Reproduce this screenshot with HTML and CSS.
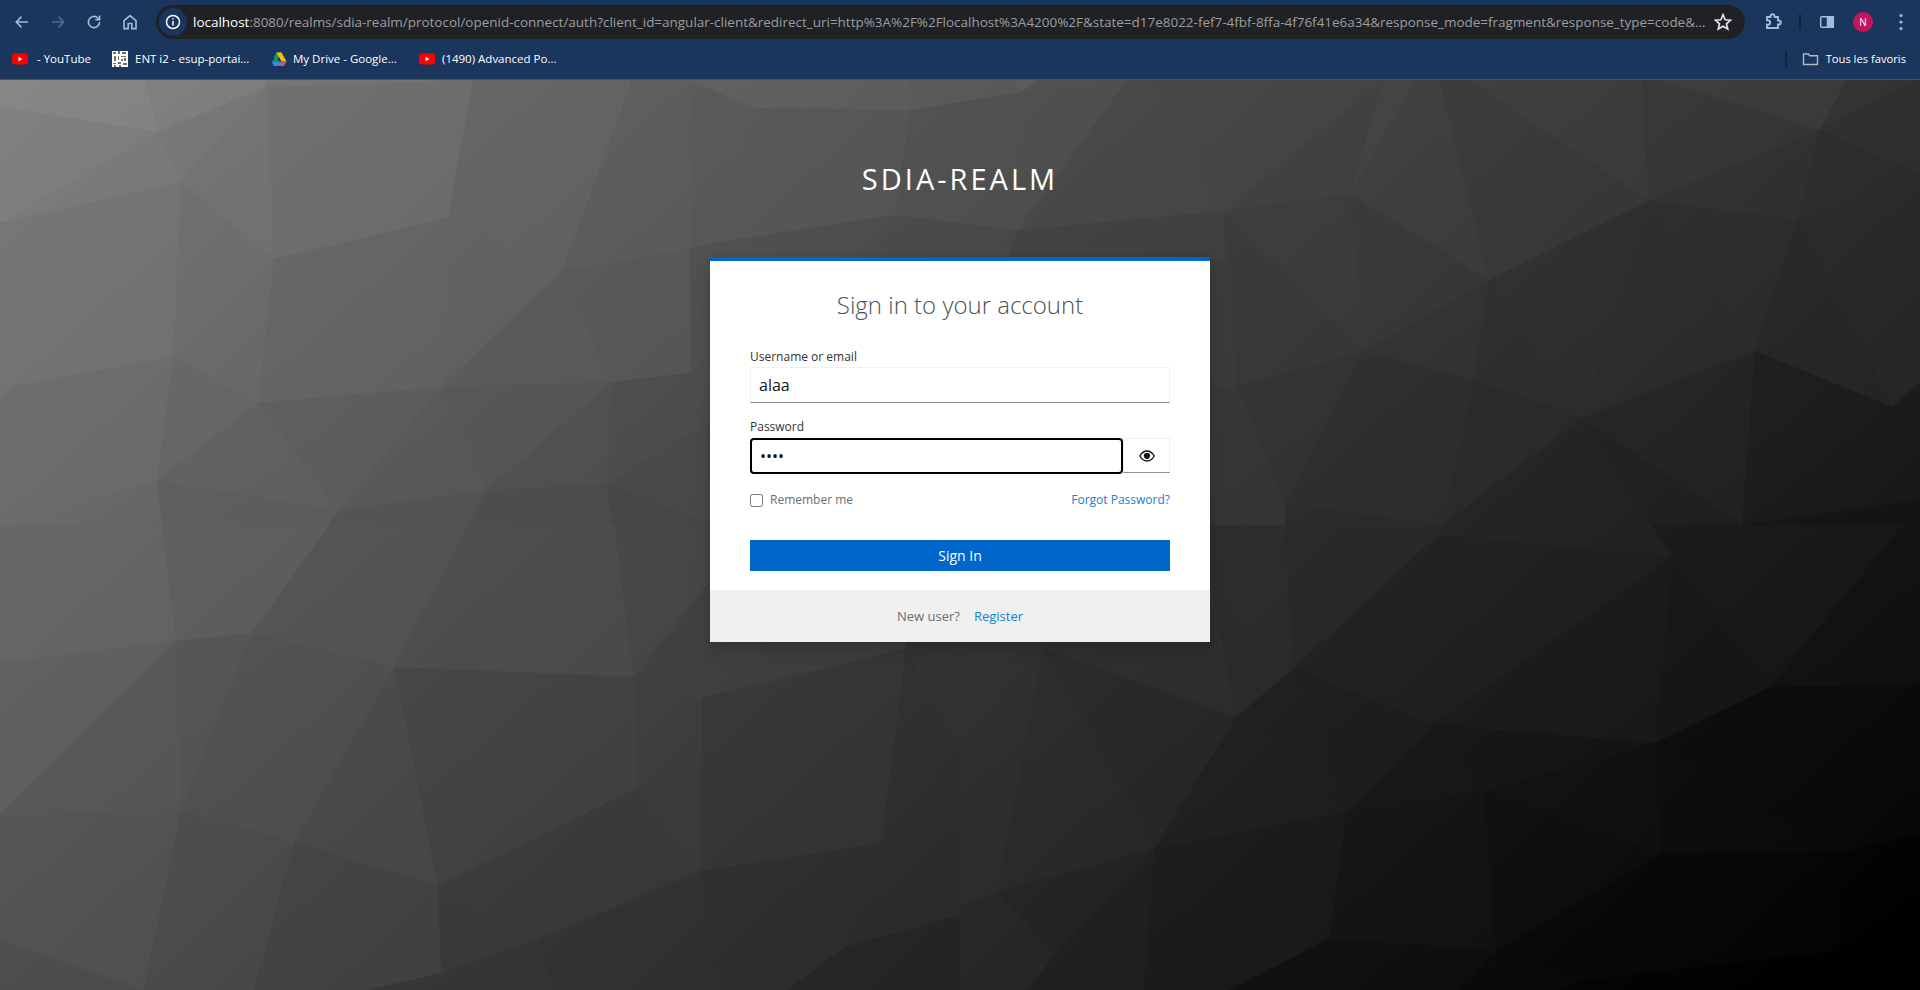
FILE: index.html
```html
<!DOCTYPE html>
<html lang="en">
<head>
<meta charset="utf-8">
<title>Sign in to sdia-realm</title>
<link rel="stylesheet" href="styles.css">
</head>
<body>
<header class="chrome">
  <div class="toolbar">
    <nav class="nav-icons">
      <svg class="ico" viewBox="0 0 16 16"><path d="M14 8H2.5M7.5 2.6 2.3 8l5.2 5.4"/></svg>
      <svg class="ico dim" viewBox="0 0 16 16"><path d="M2 8h11.5M8.5 2.6 13.7 8l-5.200 5.400"/></svg>
      <svg class="ico" viewBox="0 0 16 16"><path d="M13.600 8a5.600 5.600 0 1 1-1.700-4L13.500 5.600M13.600 1.400v4.300H9.300"/></svg>
      <svg class="ico" viewBox="0 0 16 16"><path d="M8 1.600 2 6.600v8h4.200V9.500h3.600v5.100H14v-8z"/></svg>
    </nav>
    <div class="omnibox">
      <span class="site-info"><svg class="info" viewBox="0 0 16 16"><circle cx="8" cy="8" r="6.500"/><path d="M8 7v4.500M8 4.200v1.300"/></svg></span>
      <span class="url"><span class="host">localhost</span>:8080/realms/sdia-realm/protocol/openid-connect/auth?client_id=angular-client&amp;redirect_uri=http%3A%2F%2Flocalhost%3A4200%2F&amp;state=d17e8022-fef7-4fbf-8ffa-4f76f41e6a34&amp;response_mode=fragment&amp;response_type=code&amp;…</span>
      <svg class="star" viewBox="0 0 16 16"><path d="M8 1.500 9.900 6l4.800.4-3.600 3.200 1.100 4.700L8 11.800l-4.200 2.500 1.100-4.700L1.300 6.400 6.100 6z"/></svg>
    </div>
    <div class="actions">
      <svg class="ico ext" viewBox="0 0 18 18"><path d="M3 4h3.500V3.200a2 2 0 0 1 4 0V4H14v3.500h.8a2 2 0 0 1 0 4H14V15H3v-3.200h.8a2.300 2.300 0 0 0 0-4.600H3z"/></svg>
      <span class="sep"></span>
      <svg class="panel" viewBox="0 0 16 16"><rect x="1.700" y="2.700" width="12.600" height="10.600" rx="1"/><path class="panel-fill" d="M8.500 2.700h5.800v10.600H8.500z"/></svg>
      <span class="avatar">N</span>
      <svg class="dots" viewBox="0 0 4 18"><circle cx="2" cy="2.500" r="1.600"/><circle cx="2" cy="9" r="1.600"/><circle cx="2" cy="15.500" r="1.600"/></svg>
    </div>
  </div>
  <div class="bookmarks">
    <a class="bm bm-yt"><svg class="fav" viewBox="0 0 16 16"><rect y="2.500" width="16" height="11" rx="3" fill="#f00"/><path d="M6.500 5.800v4.400L10.500 8z" fill="#fff"/></svg>&nbsp;- YouTube</a>
    <a class="bm bm-ent"><svg class="fav" viewBox="0 0 16 16"><rect width="16" height="16" fill="#fff"/><path d="M1 1h3v2H1zM6 0h2v3H6zM10 1h4v2h-4zM2 5h2v5H2zM6 5h1v4H6zM9 5h5v1H9zM12 7h2v3h-2zM9 8h2v2H9zM1 12h3v1H1zM6 11h3v2H6zM11 12h4v2h-4zM2 14h2v2H2zM7 14h2v2H7z" fill="#6f6f6f"/></svg>ENT i2 - esup-portai...</a>
    <a class="bm bm-drive"><svg class="fav" viewBox="0 0 16 16"><path d="M5.500 1.500h5L5.300 10.500 2.800 6z" fill="#0f9d58"/><path d="M5.500 1.500h5l5 9h-5z" fill="#fbbc04"/><path d="M.5 10.500h15L13 15H3z" fill="#4285f4"/><path d="M.5 10.500 5.300 6.500l2.700 4z" fill="#0f9d58"/><path d="M8 10.500h7.500L13 15H5.500z" fill="#ea4335" opacity=".45"/></svg>My Drive - Google...</a>
    <a class="bm bm-yt2"><svg class="fav" viewBox="0 0 16 16"><rect y="2.500" width="16" height="11" rx="3" fill="#f00"/><path d="M6.500 5.800v4.400L10.500 8z" fill="#fff"/></svg>(1490) Advanced Po...</a>
    <span class="bm-end">
      <span class="sep sep-bm"></span>
      <svg class="folder" viewBox="0 0 16 16"><path d="M1 3h4.800l1.500 1.800H15V13.500H1z"/></svg>
      <a class="bm bm-all">Tous les favoris</a>
    </span>
  </div>
</header>
<main class="page">
  <svg class="poly" viewBox="0 80 1920 910" preserveAspectRatio="none" aria-hidden="true">
    <defs><linearGradient id="base" gradientUnits="userSpaceOnUse" x1="0" y1="0" x2="1319" y2="1469"><stop offset="0" stop-color="#868686"/><stop offset="1" stop-color="#000"/></linearGradient></defs>
    <rect x="0" y="80" width="1920" height="910" fill="url(#base)"/>
    <g class="facets">
      <polygon fill="#8a8a8a" points="0,80 145,80 158,132 0,107"/>
      <polygon fill="#838383" points="145,80 266,80 266,87 158,132"/>
      <polygon fill="#808080" points="0,107 158,132 0,223"/>
      <polygon fill="#7c7c7c" points="158,132 181,182 0,223"/>
      <polygon fill="#787878" points="158,132 266,87 181,182"/>
      <polygon fill="#737373" points="266,87 274,259 181,182"/>
      <polygon fill="#6e6e6e" points="266,87 473,80 448,218 274,259"/>
      <polygon fill="#767676" points="266,80 473,80 266,87"/>
      <polygon fill="#636363" points="473,80 632,80 562,271 448,218"/>
      <polygon fill="#5b5b5b" points="632,80 700,80 700,247 562,271"/>
      <polygon fill="#575757" points="690,80 755,108 724,241 690,248"/>
      <polygon fill="#747474" points="0,223 181,182 173,357 13,386 0,397"/>
      <polygon fill="#6e6e6e" points="181,182 274,259 173,357"/>
      <polygon fill="#6a6a6a" points="173,357 274,259 258,403"/>
      <polygon fill="#646464" points="274,259 448,218 441,387 258,403"/>
      <polygon fill="#626262" points="448,218 562,271 441,387"/>
      <polygon fill="#5a5a5a" points="562,271 611,382 441,387"/>
      <polygon fill="#575757" points="562,271 700,247 700,373 611,382"/>
      <polygon fill="#6c6c6c" points="0,397 13,386 173,357 157,480 9,525 0,525"/>
      <polygon fill="#666666" points="173,357 258,403 157,480"/>
      <polygon fill="#606060" points="258,403 338,511 157,480"/>
      <polygon fill="#5c5c5c" points="258,403 441,387 338,511"/>
      <polygon fill="#575757" points="441,387 487,490 338,511"/>
      <polygon fill="#545454" points="441,387 611,382 487,490"/>
      <polygon fill="#4e4e4e" points="611,382 607,483 487,490"/>
      <polygon fill="#4a4a4a" points="611,382 715,370 710,420 607,483"/>
      <polygon fill="#5c5c5c" points="157,480 338,511 328,525 162,525"/>
      <polygon fill="#505050" points="338,511 487,490 469,525 328,525"/>
      <polygon fill="#484848" points="487,490 607,483 612,525 469,525"/>
      <polygon fill="#424242" points="607,483 715,525 612,525"/>
      <polygon fill="#464646" points="607,483 710,420 715,525"/>
      <polygon fill="#4c4c4c" points="690,248 724,241 712,262 712,400 690,373"/>

      <polygon fill="#666666" points="0,525 162,525 176,641 0,663"/>
      <polygon fill="#5e5e5e" points="162,525 329,525 252,633 176,641"/>
      <polygon fill="#525252" points="329,525 468,525 394,667 252,633"/>
      <polygon fill="#4b4b4b" points="468,525 614,525 634,677 394,667"/>
      <polygon fill="#454545" points="614,525 715,525 715,575 634,677"/>
      <polygon fill="#3e3e3e" points="634,677 715,575 715,690 702,698"/>
      <polygon fill="#606060" points="0,663 176,641 0,814"/>
      <polygon fill="#565656" points="176,641 181,810 0,814"/>
      <polygon fill="#535353" points="176,641 252,633 181,810"/>
      <polygon fill="#4e4e4e" points="252,633 394,667 294,842 181,810"/>
      <polygon fill="#474747" points="394,667 438,886 294,842"/>
      <polygon fill="#404040" points="394,667 634,677 637,788 438,886"/>
      <polygon fill="#3c3c3c" points="634,677 702,698 637,788"/>
      <polygon fill="#3a3a3a" points="702,698 700,871 637,788"/>
      <polygon fill="#373737" points="637,788 700,871 539,939"/>
      <polygon fill="#363636" points="637,788 539,939 438,886"/>
      <polygon fill="#333333" points="702,698 906,648 881,843 700,871"/>
      <polygon fill="#535353" points="0,814 181,810 0,940"/>
      <polygon fill="#515151" points="181,810 144,990 0,940"/>
      <polygon fill="#4a4a4a" points="0,940 144,990 0,990"/>
      <polygon fill="#4a4a4a" points="181,810 294,842 144,990"/>
      <polygon fill="#484848" points="294,842 254,990 144,990"/>
      <polygon fill="#404040" points="294,842 438,886 441,973 367,990 254,990"/>
      <polygon fill="#353535" points="438,886 539,939 441,973"/>
      <polygon fill="#2f2f2f" points="441,973 539,939 551,990 367,990"/>
      <polygon fill="#2d2d2d" points="539,939 700,871 716,990 551,990"/>
      <polygon fill="#2b2b2b" points="700,871 881,843 845,947 787,990 716,990"/>
      <polygon fill="#292929" points="881,843 960,748 960,915 845,947"/>
      <polygon fill="#202020" points="845,947 960,915 960,990 787,990"/>
      <polygon fill="#2c2c2c" points="881,843 906,648 960,748"/>
      <polygon fill="#3d3d3d" points="705,640 906,640 906,648 702,698"/>

      <polygon fill="#2f2f2f" points="906,640 1043,640 1043,648 960,748 906,648"/>
      <polygon fill="#262626" points="1043,648 1236,717 1155,848"/>
      <polygon fill="#292929" points="1043,648 1155,848 997,892"/>
      <polygon fill="#2d2d2d" points="960,745 1043,648 997,892 960,905"/>
      <polygon fill="#222222" points="997,892 1155,848 1055,955"/>
      <polygon fill="#272727" points="960,905 997,892 1055,955 1027,990 960,990"/>
      <polygon fill="#1d1d1d" points="1055,955 1155,848 1144,990 1027,990"/>
      <polygon fill="#181818" points="1155,848 1346,812 1330,938 1229,990 1144,990"/>
      <polygon fill="#1d1d1d" points="1155,848 1236,717 1346,812"/>
      <polygon fill="#1c1c1c" points="1236,717 1294,668 1346,812"/>
      <polygon fill="#1a1a1a" points="1294,668 1433,724 1346,812"/>
      <polygon fill="#141414" points="1433,724 1484,791 1346,812"/>
      <polygon fill="#131313" points="1433,724 1655,743 1484,791"/>
      <polygon fill="#0f0f0f" points="1484,791 1655,743 1660,854"/>
      <polygon fill="#0b0b0b" points="1655,743 1839,853 1660,854"/>
      <polygon fill="#0a0a0a" points="1655,743 1770,687 1839,853"/>
      <polygon fill="#0a0a0a" points="1770,687 1920,684 1920,833 1839,853"/>
      <polygon fill="#111111" points="1346,812 1484,791 1496,951 1330,938"/>
      <polygon fill="#0c0c0c" points="1484,791 1660,854 1496,951"/>
      <polygon fill="#050505" points="1660,854 1839,853 1839,951 1578,981 1496,951"/>
      <polygon fill="#030303" points="1839,853 1920,833 1920,892 1839,951"/>
      <polygon fill="#000000" points="1839,951 1920,892 1920,990 1836,990"/>
      <polygon fill="#000000" points="1578,981 1839,951 1836,990 1560,990"/>
      <polygon fill="#070707" points="1496,951 1578,981 1560,990 1456,990"/>
      <polygon fill="#0c0c0c" points="1330,938 1496,951 1456,990 1229,990"/>

      <polygon fill="#2b2b2b" points="1205,525 1285,525 1294,668 1214,603"/>
      <polygon fill="#2a2a2a" points="1214,603 1294,668 1236,717"/>
      <polygon fill="#2e2e2e" points="1043,640 1205,640 1205,600 1214,603 1236,717 1043,648"/>
      <polygon fill="#272727" points="1285,525 1438,535 1294,668"/>
      <polygon fill="#1f1f1f" points="1438,535 1433,724 1294,668"/>
      <polygon fill="#1f1f1f" points="1438,535 1673,557 1433,724"/>
      <polygon fill="#1a1a1a" points="1673,557 1655,743 1433,724"/>
      <polygon fill="#161616" points="1673,557 1770,687 1655,743"/>
      <polygon fill="#191919" points="1673,557 1742,525 1903,525 1770,687"/>
      <polygon fill="#121212" points="1770,687 1903,525 1920,525 1920,684"/>
      <polygon fill="#232323" points="1443,525 1652,525 1673,557 1438,535"/>
      <polygon fill="#1a1a1a" points="1652,525 1742,525 1673,557"/>

      <polygon fill="#454545" points="1148,80 1383,80 1224,211"/>
      <polygon fill="#464646" points="1383,80 1416,80 1350,194"/>
      <polygon fill="#404040" points="1383,80 1350,194 1224,211"/>
      <polygon fill="#404040" points="1416,80 1439,80 1489,280 1350,194"/>
      <polygon fill="#3b3b3b" points="1439,80 1470,80 1649,201 1489,280"/>
      <polygon fill="#404040" points="1470,80 1642,80 1649,201"/>
      <polygon fill="#3b3b3b" points="1642,80 1660,80 1820,130 1649,201"/>
      <polygon fill="#434343" points="1660,80 1847,80 1820,130"/>
      <polygon fill="#383838" points="1847,80 1920,80 1820,130"/>
      <polygon fill="#343434" points="1820,130 1920,80 1920,175"/>
      <polygon fill="#2f2f2f" points="1820,130 1920,175 1920,188 1798,220"/>
      <polygon fill="#343434" points="1820,130 1798,220 1649,201"/>
      <polygon fill="#3c3c3c" points="1224,211 1350,194 1364,352"/>
      <polygon fill="#393939" points="1350,194 1489,280 1364,352"/>
      <polygon fill="#373737" points="1224,211 1364,352 1237,386"/>
      <polygon fill="#3a3a3a" points="1205,211 1224,211 1237,386 1205,390"/>
      <polygon fill="#333333" points="1364,352 1489,280 1474,380"/>
      <polygon fill="#2e2e2e" points="1489,280 1582,418 1474,380"/>
      <polygon fill="#303030" points="1489,280 1649,201 1582,418"/>
      <polygon fill="#2e2e2e" points="1649,201 1755,351 1582,418"/>
      <polygon fill="#2f2f2f" points="1649,201 1798,220 1755,351"/>
      <polygon fill="#2a2a2a" points="1798,220 1892,407 1755,351"/>
      <polygon fill="#2d2d2d" points="1798,220 1920,188 1920,382 1892,407"/>
      <polygon fill="#323232" points="1237,386 1364,352 1285,504"/>
      <polygon fill="#2d2d2d" points="1364,352 1474,380 1443,525 1285,504"/>
      <polygon fill="#2a2a2a" points="1474,380 1582,418 1443,525"/>
      <polygon fill="#232323" points="1582,418 1651,525 1443,525"/>
      <polygon fill="#202020" points="1582,418 1742,525 1651,525"/>
      <polygon fill="#252525" points="1582,418 1755,351 1742,525"/>
      <polygon fill="#1d1d1d" points="1755,351 1892,407 1742,525"/>
      <polygon fill="#1a1a1a" points="1892,407 1920,403 1920,500 1742,525"/>
      <polygon fill="#131313" points="1920,500 1920,525 1742,525"/>
      <polygon fill="#363636" points="1205,390 1237,386 1285,504 1285,525 1205,525"/>
      <polygon fill="#292929" points="1285,504 1443,525 1438,535 1285,525"/>

      <polygon fill="#616161" points="690,80 783,80 755,108"/>
      <polygon fill="#606060" points="783,80 910,80 910,110 755,108"/>
      <polygon fill="#5c5c5c" points="910,80 1012,80 1022,92 910,110"/>
      <polygon fill="#626262" points="1012,80 1036,80 1022,92"/>
      <polygon fill="#515151" points="1036,80 1127,80 1022,92"/>
      <polygon fill="#565656" points="755,108 910,110 895,215 724,241"/>
      <polygon fill="#505050" points="910,110 1022,92 1017,230 895,215"/>
      <polygon fill="#4f4f4f" points="1022,92 1127,80 1017,230"/>
      <polygon fill="#474747" points="1127,80 1148,80 1224,211 1017,230"/>
      <polygon fill="#4b4b4b" points="724,241 895,215 845,262 705,262"/>
      <polygon fill="#474747" points="895,215 1017,230 1007,262 845,262"/>
      <polygon fill="#3e3e3e" points="1017,230 1224,211 1224,262 1007,262"/>
    </g>
  </svg>
  <div class="login">
    <h1 class="realm">SDIA-REALM</h1>
    <section class="card">
      <div class="card-body">
        <h2 class="card-title">Sign in to your account</h2>
        <form class="form">
          <label class="label" for="username">Username or email</label>
          <input class="field" id="username" type="text" value="alaa">
          <label class="label label-pw" for="password">Password</label>
          <div class="pw-row">
            <input class="field field-focus" id="password" type="password" value="alaa">
            <button class="eye" type="button" aria-label="Show password"><svg viewBox="0 0 16 12"><path class="eye-out" d="M.8 6C2.800 2.600 5.300 1 8 1s5.200 1.600 7.200 5c-2 3.400-4.500 5-7.200 5S2.800 9.400.8 6z"/><circle class="eye-pupil" cx="8" cy="5.800" r="3.100"/></svg></button>
          </div>
          <div class="options">
            <label class="remember"><input class="check" type="checkbox">Remember me</label>
            <a class="link">Forgot Password?</a>
          </div>
          <button class="submit" type="button">Sign In</button>
        </form>
      </div>
      <div class="card-foot"><span class="new-user">New user?</span><a class="link link-reg">Register</a></div>
    </section>
  </div>
</main>
</body>
</html>
```
FILE: styles.css
```css
* { box-sizing: border-box; }
html, body { margin: 0; height: 100%; }
body { display: flex; flex-direction: column; height: 990px; overflow: hidden; font-family: "Open Sans", "Noto Sans", sans-serif; background: #000; }

.chrome { height: 80px; flex: none; background: #1a365d; border-bottom: 1px solid #35567f; display: flex; flex-direction: column; }
.toolbar { height: 44px; flex: none; display: flex; align-items: center; }
.nav-icons { width: 156px; flex: none; display: flex; gap: 20px; padding-left: 14px; }
.ico { width: 16px; height: 16px; fill: none; stroke: #a3bbdc; stroke-width: 1.6; }
.ico.dim { stroke: #506b93; }
.omnibox { width: 1589px; height: 34px; flex: none; border-radius: 17px; background: #202124; display: flex; align-items: center; padding-left: 3px; }
.site-info { width: 28px; height: 28px; border-radius: 50%; background: #1a365d; display: flex; align-items: center; justify-content: center; flex: none; }
.info { width: 16px; height: 16px; fill: none; stroke: #fff; stroke-width: 1.5; }
.url { margin-left: 6px; width: 1518px; white-space: nowrap; overflow: hidden; font-size: 13.47px; color: #9b9da1; flex: none; }
.host { color: #fff; }
.star { width: 18px; height: 18px; margin-left: 3px; fill: none; stroke: #e3e3e3; stroke-width: 1.5; flex: none; }
.actions { flex: 1; display: flex; align-items: center; }
.ext { width: 18px; height: 18px; margin-left: 19px; stroke-width: 1.9; }
.sep { width: 2px; height: 16px; background: #0f2542; margin-left: 17px; flex: none; }
.panel { width: 16px; height: 16px; margin-left: 18px; fill: none; stroke: #a3bbdc; stroke-width: 1.5; flex: none; }
.panel-fill { fill: #a3bbdc; }
.avatar { width: 20px; height: 20px; margin-left: 18px; border-radius: 50%; background: #c2185b; color: #fff; font-size: 10px; line-height: 20px; text-align: center; flex: none; }
.dots { width: 4px; height: 18px; margin-left: 26px; fill: #a3bbdc; flex: none; }

.bookmarks { height: 29px; flex: none; display: flex; align-items: center; padding-left: 12px; font-size: 11.5px; color: #fff; }
.bm { display: flex; align-items: center; white-space: nowrap; }
.fav { width: 16px; height: 16px; flex: none; margin-right: 7px; }
.bm-yt { width: 100px; }
.bm-ent { width: 159px; }
.bm-drive { width: 148px; }
.bm-yt2 { width: 200px; }
.bm-yt .fav { margin-right: 6px; }
.bm-drive .fav { margin-right: 6px; }
.bm-end { margin-left: auto; display: flex; align-items: center; padding-right: 14px; }
.sep-bm { height: 16px; margin: 0 15px 0 0; }
.folder { width: 17px; height: 16px; margin-right: 7px; fill: none; stroke: #b5b8bd; stroke-width: 1.4; flex: none; }
.bm-all { font-size: 11.2px; }

.page { position: relative; flex: 1; overflow: hidden; }
.poly { position: absolute; inset: 0; width: 100%; height: 100%; }
.facets { opacity: .6; }
.login { position: relative; width: 500px; margin: 0 auto; display: flex; flex-direction: column; }
.realm { margin: 0; height: 177px; padding-top: 81px; text-align: center; font-size: 29px; line-height: 35px; font-weight: 400; letter-spacing: 3px; color: #fff; }

.card { background: #fff; border-top: 4px solid #06c; height: 385px; display: flex; flex-direction: column; box-shadow: 0 8px 16px rgba(3,3,3,.16), 0 0 6px rgba(3,3,3,.08); }
.card-body { flex: 1; padding: 27px 40px 0; }
.card-title { margin: 0; text-align: center; font-size: 24px; line-height: 33px; font-weight: 300; color: #4d5258; }
.form { display: flex; flex-direction: column; margin-top: 27px; }
.label { font-size: 12px; line-height: 17px; color: #333; }
.label-pw { margin-top: 15px; }
.field { width: 100%; height: 36px; margin-top: 2px; padding: 0 8px; border: 1px solid #f0f0f0; border-bottom-color: #8a8d90; border-radius: 0; background: #fff; font: 16px "Open Sans", sans-serif; color: #151515; outline: 0; }
.pw-row { display: flex; margin-top: 3px; }
.field-focus { width: 373px; margin-top: 0; border: 2px solid #000; border-radius: 4px; flex: none; }
.eye { width: 47px; height: 35px; padding: 0; border: 1px solid #f0f0f0; border-bottom-color: #8a8d90; background: #fff; display: flex; align-items: center; justify-content: center; }
.eye svg { width: 16px; height: 12px; }
.eye-out { fill: #fff; stroke: #151515; stroke-width: 1.4; }
.eye-pupil { fill: #151515; }
.options { display: flex; justify-content: space-between; align-items: center; margin-top: 17px; font-size: 12px; line-height: 18px; }
.remember { display: flex; align-items: center; color: #6a6e73; }
.check { width: 13px; height: 13px; margin: 0 7px 0 0; }
.link { color: #1083d1; }
.submit { height: 31px; margin-top: 31px; border: 0; background: #06c; color: #fff; font: 14px "Open Sans", sans-serif; }
.card-foot { height: 52px; background: #f0f0f0; display: flex; align-items: center; justify-content: center; gap: 14px; font-size: 13px; }
.new-user { color: #6a6e73; }
```
